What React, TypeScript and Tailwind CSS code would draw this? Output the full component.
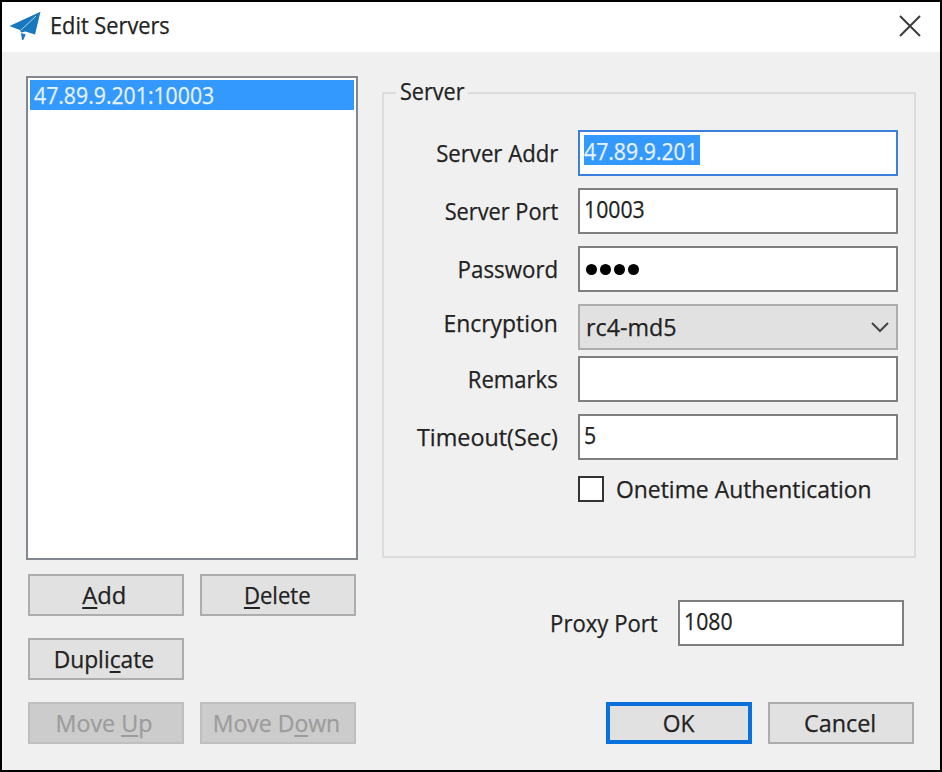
import type { ReactNode } from "react";

type TextProps = { children: ReactNode; className?: string };

function Text({ children, className = "" }: TextProps) {
  return <span className={`inline-block whitespace-pre ${className}`}>{children}</span>;
}

function Row({
  label,
  labelClass,
  className = "",
  children,
}: {
  label: string;
  labelClass: string;
  className?: string;
  children: ReactNode;
}) {
  return (
    <div className={`flex h-[46px] items-center ${className}`}>
      <label className="w-[174px] text-right">
        <Text className={`origin-right ${labelClass}`}>{label}</Text>
      </label>
      <div className="ml-5 h-[46px] w-[320px]">{children}</div>
    </div>
  );
}

function Field({ children, focused = false }: { children?: ReactNode; focused?: boolean }) {
  return (
    <div
      className={`flex h-full w-full items-start border-2 bg-white pt-[3px] pl-1 ${
        focused ? "border-[#3c7fdc]" : "border-[#7f7f7f]"
      }`}
    >
      {children}
    </div>
  );
}

function Button({
  children,
  className = "w-[156px]",
  kind = "normal",
}: {
  children: ReactNode;
  className?: string;
  kind?: "normal" | "primary" | "disabled";
}) {
  const look =
    kind === "primary"
      ? "border-4 border-[#0871db] bg-[#e1e1e1]"
      : kind === "disabled"
        ? "border-2 border-[#bfbfbf] bg-[#cccccc] text-[#9c9c9c]"
        : "border-2 border-[#adadad] bg-[#e1e1e1]";
  return (
    <button type="button" className={`flex h-[42px] items-center justify-center ${look} ${className}`}>
      {children}
    </button>
  );
}

function Key({ children }: { children: ReactNode }) {
  return <span className="underline decoration-2 underline-offset-[3px]">{children}</span>;
}

export default function App() {
  return (
    <div className="flex h-[772px] w-[942px] flex-col overflow-hidden border-2 border-black bg-[#f0f0f0] font-['Open_Sans','Noto_Sans',sans-serif] text-[24px] leading-[32px] text-[#222222] [-webkit-text-stroke:0.25px]">
      <header className="flex h-[50px] shrink-0 items-start justify-between bg-white pt-[7px] pr-[19px] pl-[7px]">
        <div className="flex items-start">
          <svg width="32" height="32" viewBox="0 0 32 32" className="mt-[2px] shrink-0">
            <path d="M0.5 15L31.5 0.8L26 23.5L16.5 20.5L12 21.5L11 19L7.5 17.8Z" fill="#1878be" />
            <path d="M27 5L11.5 19.5" stroke="#b5d6ec" strokeWidth="1" />
            <path d="M12 22L16.8 23.6L14.2 29H13Z" fill="#1878be" />
          </svg>
          <div className="ml-[9px]">
            <Text className="origin-left scale-x-[0.907]">Edit Servers</Text>
          </div>
        </div>
        <svg width="22" height="22" viewBox="0 0 22 22" className="mt-[6px] shrink-0">
          <path d="M1 1L21 21M21 1L1 21" stroke="#3c3c3c" strokeWidth="2" />
        </svg>
      </header>

      <main className="flex flex-1">
        <section className="ml-6 w-[332px] pt-6">
          <div className="h-[484px] border-2 border-[#828790] bg-white p-[2px]">
            <div className="h-[30px] bg-[#3399ff] pl-1 leading-[30px] text-[#e8f2ff]">
              <Text className="origin-left scale-x-[0.885]">47.89.9.201:10003</Text>
            </div>
          </div>
          <div className="mt-[14px] ml-[2px] grid grid-cols-[156px_156px] gap-x-4 gap-y-[22px]">
            <Button className="w-[156px] pr-[3px]">
              <Text className="scale-x-[0.99]"><Key>A</Key>dd</Text>
            </Button>
            <Button className="w-[156px] pr-[2px]">
              <Text className="scale-x-[0.92]"><Key>D</Key>elete</Text>
            </Button>
            <Button className="col-span-2 w-[156px] pr-1">
              <Text className="scale-x-[0.95]">Dupli<Key>c</Key>ate</Text>
            </Button>
            <Button kind="disabled" className="w-[156px] pr-1">
              <Text className="scale-x-[0.97]">Move <Key>U</Key>p</Text>
            </Button>
            <Button kind="disabled" className="w-[156px] pr-1">
              <Text className="scale-x-[0.96]">Move D<Key>o</Key>wn</Text>
            </Button>
          </div>
        </section>

        <section className="ml-6 w-[534px] pt-[23px]">
          <fieldset className="h-[483px] border-2 border-[#dcdcdc]">
            <legend className="ml-3 h-[36px] w-[72px] pl-1">
              <Text className="origin-left scale-x-[0.9]">Server</Text>
            </legend>
            <div className="pt-[19px]">
              <Row label="Server Addr" labelClass="scale-x-[0.923]">
                <Field focused>
                  <div className="h-[30px] w-[116px] bg-[#3399ff] text-[#e8f2ff]">
                    <Text className="origin-left scale-x-[0.885]">47.89.9.201</Text>
                  </div>
                </Field>
              </Row>
              <Row label="Server Port" labelClass="scale-x-[0.907]" className="mt-3">
                <Field><Text className="origin-left scale-x-[0.885]">10003</Text></Field>
              </Row>
              <Row label="Password" labelClass="scale-x-[0.93]" className="mt-3">
                <Field>
                  <div className="mt-[13px] ml-[2px] flex gap-[3px]">
                    <span className="size-[11px] rounded-full bg-black" />
                    <span className="size-[11px] rounded-full bg-black" />
                    <span className="size-[11px] rounded-full bg-black" />
                    <span className="size-[11px] rounded-full bg-black" />
                  </div>
                </Field>
              </Row>
              <Row label="Encryption" labelClass="scale-x-[0.955] mb-2" className="mt-3">
                <div className="flex h-full items-start justify-between border-2 border-[#adadad] bg-[#e1e1e1] pt-[5px] pr-[7px] pl-[6px]">
                  <Text className="origin-left scale-x-[0.97]">rc4-md5</Text>
                  <svg width="18" height="12" viewBox="0 0 18 12" className="mt-[10px]">
                    <path d="M1 2L9 10L17 2" fill="none" stroke="#444444" strokeWidth="2" />
                  </svg>
                </div>
              </Row>
              <Row label="Remarks" labelClass="scale-x-[0.92]" className="mt-[6px]">
                <Field />
              </Row>
              <Row label="Timeout(Sec)" labelClass="scale-x-[0.973]" className="mt-3">
                <Field><Text className="origin-left scale-x-[0.885]">5</Text></Field>
              </Row>
              <div className="mt-[13px] ml-[194px] flex items-center">
                <span className="size-[26px] border-2 border-[#333333] bg-white" />
                <div className="ml-3">
                  <Text className="origin-left scale-x-[0.954]">Onetime Authentication</Text>
                </div>
              </div>
            </div>
          </fieldset>

          <div className="mt-[42px] flex h-[46px] items-center">
            <div className="w-[276px] text-right">
              <Text className="origin-right scale-x-[0.922]">Proxy Port</Text>
            </div>
            <div className="ml-5 h-full w-[226px]">
              <Field><Text className="origin-left scale-x-[0.885]">1080</Text></Field>
            </div>
          </div>
          <div className="mt-14 ml-[224px] flex gap-4">
            <Button kind="primary" className="w-[146px] pr-px">
              <Text className="scale-x-[0.95]">OK</Text>
            </Button>
            <Button className="w-[146px] pr-[2px]">
              <Text className="scale-x-[0.975]">Cancel</Text>
            </Button>
          </div>
        </section>
      </main>
    </div>
  );
}
